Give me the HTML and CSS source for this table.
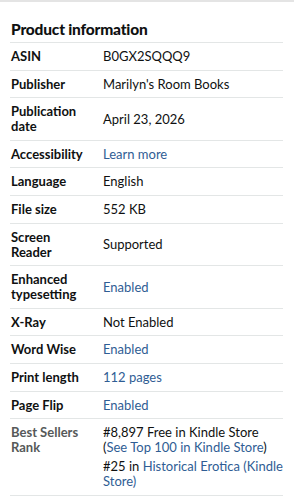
FILE: index.html
```html
<!DOCTYPE html>
<html lang="en">
<head>
<meta charset="utf-8">
<link rel="stylesheet" href="styles.css">
</head>
<body>
<div class="topline"></div>
<section class="info">
  <h2 class="title">Product information</h2>
  <div class="row"><div class="label">ASIN</div><div class="value">B0GX2SQQQ9</div></div>
  <div class="row"><div class="label">Publisher</div><div class="value">Marilyn's Room Books</div></div>
  <div class="row"><div class="label">Publication date</div><div class="value">April 23, 2026</div></div>
  <div class="row"><div class="label">Accessibility</div><div class="value"><a class="link" href="#">Learn more</a></div></div>
  <div class="row"><div class="label">Language</div><div class="value">English</div></div>
  <div class="row"><div class="label">File size</div><div class="value">552 KB</div></div>
  <div class="row"><div class="label">Screen Reader</div><div class="value">Supported</div></div>
  <div class="row"><div class="label">Enhanced typesetting</div><div class="value"><a class="link" href="#">Enabled</a></div></div>
  <div class="row"><div class="label">X-Ray</div><div class="value">Not Enabled</div></div>
  <div class="row"><div class="label">Word Wise</div><div class="value"><a class="link" href="#">Enabled</a></div></div>
  <div class="row"><div class="label">Print length</div><div class="value"><a class="link" href="#">112 pages</a></div></div>
  <div class="row"><div class="label">Page Flip</div><div class="value"><a class="link" href="#">Enabled</a></div></div>
  <div class="row">
    <div class="label muted">Best Sellers Rank</div>
    <div class="value">
      <div class="rank">#8,897 Free in Kindle Store (<a class="link" href="#">See Top 100 in Kindle Store</a>)</div>
      <div class="rank">#25 in <a class="link" href="#">Historical Erotica (Kindle Store)</a></div>
    </div>
  </div>
</section>
</body>
</html>
```
FILE: styles.css
```css
html, body {
  margin: 0;
  padding: 0;
  background: #ffffff;
}
body {
  font-family: Lato, "Liberation Sans", sans-serif;
  color: #0f1111;
  font-size: 13px;
}
.topline {
  height: 2px;
  background: #e4e4e4;
}
.info {
  padding: 0 11px 0 10px;
}
.title {
  margin: 0;
  padding: 17px 0 3px 1px;
  font-size: 15.5px;
  line-height: 20px;
  font-weight: 900;
  letter-spacing: -0.2px;
  border-bottom: 1px solid #e3e6e6;
}
.row {
  display: grid;
  grid-template-columns: 92px 1fr;
  padding: 6px 0 5.6px 1px;
  line-height: 15px;
  border-bottom: 1px solid #e3e6e6;
  align-items: center;
}
.label {
  font-weight: 700;
  max-width: 70px;
}
.label.muted {
  color: #565959;
  align-self: start;
}
.value {
  color: #0f1111;
}
.link {
  color: #2f5d94;
  text-decoration: none;
}
.rank + .rank {
  margin-top: 4px;
}
```
